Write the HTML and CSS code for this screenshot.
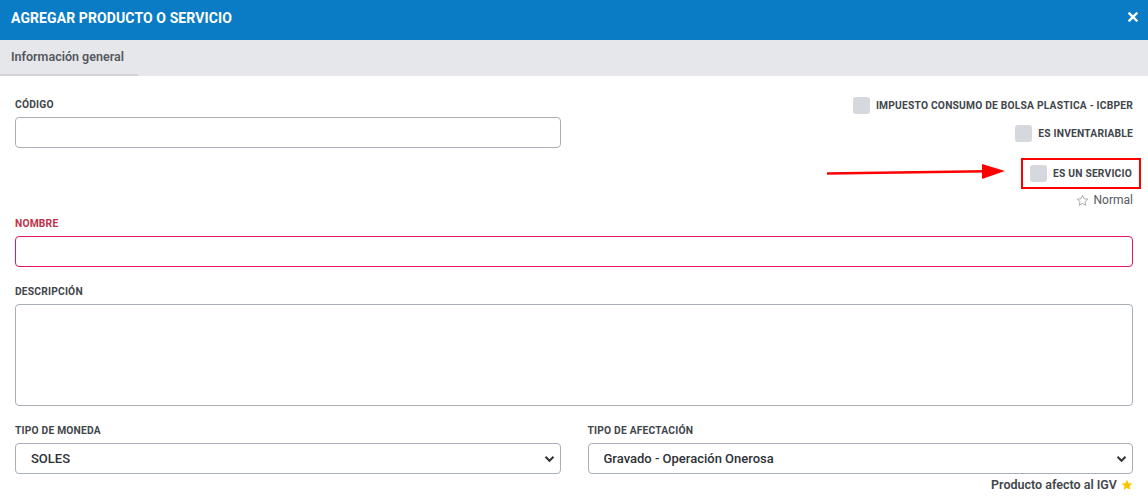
FILE: index.html
```html
<!DOCTYPE html>
<html lang="es">
<head>
    <meta charset="UTF-8">
    <title>Agregar producto o servicio</title>
    <link rel="stylesheet" href="styles.css">
</head>
<body>

    <div class="modal">
        <header class="modal-header">
            <h1>AGREGAR PRODUCTO O SERVICIO</h1>
            <button class="btn-close" aria-label="Cerrar">
                <svg width="10" height="10" viewBox="0 0 10 10"><path d="M1.5 1.5 L8.5 8.5 M8.5 1.5 L1.5 8.5" stroke="#fff" stroke-width="2.4" stroke-linecap="square"/></svg>
            </button>
        </header>

        <nav class="tabs">
            <div class="tab active">Información general</div>
        </nav>

        <form class="modal-body">
            <div class="row">
                <div class="field">
                    <label for="codigo">CÓDIGO</label>
                    <input type="text" id="codigo">
                </div>

                <div class="checks">
                    <label class="check"><span class="box"></span>IMPUESTO CONSUMO DE BOLSA PLASTICA - ICBPER</label>
                    <label class="check check-inv"><span class="box"></span>ES INVENTARIABLE</label>
                    <label class="check check-marked"><span class="box"></span>ES UN SERVICIO
                        <!-- flecha de anotación -->
                        <svg class="arrow" width="182" height="22" viewBox="0 0 182 22"><path d="M1 12.5 L160 10.2" stroke="#f00" stroke-width="2.4"/><path d="M156 3 L179 10 L156 18 Z" fill="#f00"/></svg>
                    </label>
                    <div class="hint">
                        <svg width="13" height="13" viewBox="0 0 24 24"><path d="M12 2.5l2.9 6.3 6.9.7-5.2 4.6 1.5 6.8L12 17.4l-6.1 3.5 1.5-6.8-5.2-4.6 6.9-.7z" fill="none" stroke="#9aa0a6" stroke-width="1.6" stroke-linejoin="round"/></svg>
                        Normal
                    </div>
                </div>
            </div>

            <div class="field field-block">
                <label for="nombre" class="required">NOMBRE</label>
                <input type="text" id="nombre" class="invalid">
            </div>

            <div class="field field-block">
                <label for="descripcion">DESCRIPCIÓN</label>
                <textarea id="descripcion"></textarea>
            </div>

            <div class="row">
                <div class="field">
                    <label for="moneda">TIPO DE MONEDA</label>
                    <div class="select">
                        <select id="moneda"><option>SOLES</option></select>
                        <svg width="11" height="8" viewBox="0 0 11 8"><path d="M1.5 1.8 L5.5 5.8 L9.5 1.8" fill="none" stroke="#333" stroke-width="2"/></svg>
                    </div>
                </div>
                <div class="field">
                    <label for="afectacion">TIPO DE AFECTACIÓN</label>
                    <div class="select">
                        <select id="afectacion"><option>Gravado - Operación Onerosa</option></select>
                        <svg width="11" height="8" viewBox="0 0 11 8"><path d="M1.5 1.8 L5.5 5.8 L9.5 1.8" fill="none" stroke="#333" stroke-width="2"/></svg>
                    </div>
                    <div class="igv">
                        Producto afecto al IGV
                        <svg width="12" height="12" viewBox="0 0 24 24"><path d="M12 1.5l3.2 6.9 7.5.8-5.6 5.1 1.6 7.4L12 17.9l-6.7 3.8 1.6-7.4-5.6-5.1 7.5-.8z" fill="#f7c600"/></svg>
                    </div>
                </div>
            </div>
        </form>
    </div>

</body>
</html>
```

FILE: styles.css
```css
* {
    box-sizing: border-box;
}

body {
    margin: 0;
    font-family: Roboto, "Liberation Sans", Arial, sans-serif;
    background-color: #fff;
    color: #41464b;
}

.modal-header {
    height: 40px;
    background-color: #0a7cc6;
    display: flex;
    align-items: center;
    justify-content: space-between;
    padding: 0 10px 5px 11px;
}

.modal-header h1 {
    margin: 0;
    font-size: 14px;
    font-weight: 700;
    color: #fff;
    letter-spacing: 0.1px;
}

.btn-close {
    background: none;
    border: none;
    padding: 0;
    display: flex;
    cursor: pointer;
    margin-top: -2px;
}

.tabs {
    height: 36px;
    background-color: #e6e7eb;
    display: flex;
}

.tab {
    width: 138px;
    padding: 0 11px;
    font-size: 12.5px;
    font-weight: 600;
    color: #55585d;
    line-height: 34px;
    border-bottom: 2px solid #d2d3d7;
}

.modal-body {
    padding: 21px 15px 0 15px;
}

.row {
    display: grid;
    grid-template-columns: 1fr 1fr;
    column-gap: 27px;
}

.field label {
    display: block;
    font-size: 10.25px;
    font-weight: 700;
    line-height: 16px;
    margin-bottom: 4px;
    color: #41464b;
    letter-spacing: 0.2px;
}

.field label.required {
    color: #c13148;
}

.field-block {
    margin-top: 17px;
}

.row + .field-block {
    margin-top: 9px;
}

.field-block + .row {
    margin-top: 17px;
}

input, textarea, select {
    width: 100%;
    height: 31px;
    border: 1px solid #a9afb6;
    border-radius: 4px;
    font-family: inherit;
    font-size: 13px;
    background-color: #fff;
    outline: none;
}

input.invalid {
    border-color: #e3175b;
}

textarea {
    height: 102px;
    resize: none;
    display: block;
}

.select {
    position: relative;
}

.select select {
    appearance: none;
    -webkit-appearance: none;
    padding: 0 30px 0 15px;
    font-weight: 500;
    color: #2e3236;
}

.select svg {
    position: absolute;
    right: 6px;
    top: 12px;
    pointer-events: none;
}

.checks {
    display: flex;
    flex-direction: column;
    align-items: flex-end;
}

.check {
    display: flex;
    align-items: center;
    font-size: 10.25px;
    font-weight: 700;
    color: #41464b;
    letter-spacing: 0.2px;
    line-height: 17px;
}

.box {
    width: 17px;
    height: 17px;
    border-radius: 3px;
    background-color: #d5d9dd;
    margin-right: 6px;
}

.check-inv {
    margin-top: 11px;
}

.check-marked {
    position: relative;
    margin-top: 16px;
    margin-right: -8px;
    padding: 5px 7px;
    border: 2px solid #f00;
}

.arrow {
    position: absolute;
    left: -197px;
    top: 1px;
}

.hint {
    display: flex;
    align-items: center;
    gap: 5px;
    margin-top: 4px;
    font-size: 12px;
    line-height: 14px;
    color: #55585d;
}

.igv {
    display: flex;
    align-items: center;
    justify-content: flex-end;
    gap: 4px;
    margin-top: 4px;
    font-size: 12.5px;
    font-weight: 600;
    line-height: 14px;
    color: #41464b;
}
```
